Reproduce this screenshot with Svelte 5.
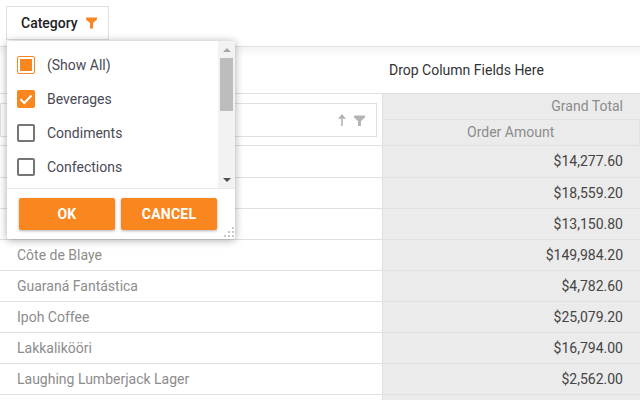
<script>
  const rows = [
    ['', '$14,277.60'], ['', '$18,559.20'], ['', '$13,150.80'],
    ['Côte de Blaye', '$149,984.20'], ['Guaraná Fantástica', '$4,782.60'],
    ['Ipoh Coffee', '$25,079.20'], ['Lakkalikööri', '$16,794.00'],
    ['Laughing Lumberjack Lager', '$2,562.00'], ['', '']
  ];
  const items = [
    { label: '(Show All)', state: 'mixed' },
    { label: 'Beverages', state: 'on' },
    { label: 'Condiments', state: 'off' },
    { label: 'Confections', state: 'off' }
  ];
</script>

<div class="page">
  <div class="toolbar">
    <div class="chip">
      <span>Category</span>
      <svg width="11" height="12" viewBox="0 0 11 12"><path d="M0 0.5H11V2.5L7 6V11.5H4V6L0 2.5Z" fill="#f9861e"/></svg>
    </div>
  </div>

  <div class="dropzone">Drop Column Fields Here</div>

  <div class="grid">
    <div class="left-head">
      <div class="filterbox">
        <svg width="8" height="12" viewBox="0 0 8 12"><path d="M4 0L8 4.8H4.8V12H3.2V4.8H0Z" fill="#b4b4b4"/></svg>
        <svg width="11" height="12" viewBox="0 0 11 12"><path d="M0 1.5H11V3.5L7 7V12H4V7L0 3.5Z" fill="#b4b4b4"/></svg>
      </div>
    </div>
    <div class="right-head">
      <div class="h1">Grand Total</div>
      <div class="h2"><span>Order Amount</span></div>
    </div>
    {#each rows as r}
      <div class="name">{r[0]}</div>
      <div class="val">{r[1]}</div>
    {/each}
  </div>

  <div class="popup">
    <div class="list">
      <div class="items">
        {#each items as it}
          <div class="item">
            <span class="box {it.state}">
              {#if it.state === 'on'}
                <svg width="18" height="18" viewBox="0 0 18 18"><path d="M3.5 9.2L7.3 13L14.5 5.5" fill="none" stroke="#fff" stroke-width="2"/></svg>
              {/if}
            </span>
            <span class="lbl">{it.label}</span>
          </div>
        {/each}
      </div>
      <div class="scroll">
        <svg class="arrow" width="8" height="4" viewBox="0 0 8 4"><path d="M0 4L4 0L8 4Z" fill="#a6a6a6"/></svg>
        <div class="thumb"></div>
        <svg class="arrow down" width="8" height="4" viewBox="0 0 8 4"><path d="M0 0L8 0L4 4Z" fill="#505050"/></svg>
      </div>
    </div>
    <div class="footer">
      <button>OK</button>
      <button>CANCEL</button>
      <svg class="grip" width="10" height="10" viewBox="0 0 10 10" fill="#c8c8c8">
        <rect x="8" y="0" width="2" height="2"/><rect x="4" y="4" width="2" height="2"/><rect x="8" y="4" width="2" height="2"/>
        <rect x="0" y="8" width="2" height="2"/><rect x="4" y="8" width="2" height="2"/><rect x="8" y="8" width="2" height="2"/>
      </svg>
    </div>
  </div>
</div>

<style>
  :global(body) { margin: 0; }
  .page {
    position: relative;
    width: 640px;
    height: 400px;
    overflow: hidden;
    background: #fff;
    font-family: Roboto, "Liberation Sans", sans-serif;
    font-size: 14px;
  }
  .toolbar {
    height: 47px;
    box-sizing: border-box;
    padding: 6px;
    border-bottom: 1px solid #e0e0e0;
  }
  .chip {
    width: 103px;
    height: 34px;
    box-sizing: border-box;
    border: 1px solid #e0e0e0;
    display: flex;
    align-items: center;
    gap: 8px;
    padding-left: 14px;
    font-weight: 500;
    font-size: 14px;
    color: #212121;
  }
  .dropzone {
    height: 46px;
    box-sizing: border-box;
    display: flex;
    align-items: center;
    padding-left: 389px;
    font-size: 14px;
    color: #333;
    background: linear-gradient(#f4f4f4, #fff 10px);
  }
  .grid {
    display: grid;
    grid-template-columns: 382px 258px;
    grid-template-rows: 52px 32px;
    grid-auto-rows: 31px;
    border-top: 1px solid #e0e0e0;
    color: #333;
  }
  .left-head {
    box-sizing: border-box;
    border-bottom: 1px solid #e0e0e0;
    padding: 9px 5px 0 0;
  }
  .filterbox {
    height: 34px;
    box-sizing: border-box;
    border: 1px solid #e0e0e0;
    display: flex;
    justify-content: flex-end;
    align-items: center;
    gap: 8px;
    padding-right: 11px;
  }
  .right-head {
    box-sizing: border-box;
    background: #ebebeb;
    border-left: 1px solid #e0e0e0;
    border-bottom: 1px solid #e0e0e0;
    color: #8c8c8c;
    font-size: 14px;
  }
  .h1 {
    height: 26px;
    box-sizing: border-box;
    border-bottom: 1px solid #e0e0e0;
    text-align: right;
    padding-right: 17px;
    line-height: 25px;
  }
  .h2 {
    height: 25px;
    box-sizing: border-box;
    border-right: 1px solid #e0e0e0;
    line-height: 25px;
    padding-left: 84px;
  }
  .name, .val {
    box-sizing: border-box;
    border-bottom: 1px solid #e0e0e0;
    font-size: 14px;
    line-height: 30px;
  }
  .name { padding-left: 17px; color: #8c8c8c; }
  .val {
    background: #ebebeb;
    border-left: 1px solid #e0e0e0;
    text-align: right;
    padding-right: 17px;
    color: #444;
  }
  .popup {
    position: absolute;
    left: 7px;
    top: 41px;
    width: 228px;
    height: 198px;
    background: #fff;
    box-shadow: 0 1px 8px rgba(0, 0, 0, 0.35);
    border-radius: 2px;
    display: flex;
    flex-direction: column;
  }
  .list {
    height: 148px;
    display: flex;
    box-sizing: border-box;
    border-bottom: 1px solid #e8e8e8;
  }
  .items { flex: 1; padding-top: 7px; }
  .item {
    height: 34px;
    display: flex;
    align-items: center;
    gap: 12px;
    padding-left: 10px;
    font-size: 14px;
    color: #4a4a55;
  }
  .box {
    width: 18px;
    height: 18px;
    box-sizing: border-box;
    border-radius: 2px;
    display: block;
    position: relative;
  }
  .box.off { border: 2px solid #757575; }
  .box.mixed { border: 1px solid #f9861e; }
  .box.mixed::after {
    content: "";
    position: absolute;
    inset: 2px;
    background: #f9861e;
  }
  .box.on { background: #f9861e; }
  .box svg { display: block; }
  .scroll {
    width: 17px;
    background: #f2f2f2;
    display: flex;
    flex-direction: column;
    align-items: center;
    padding-top: 7px;
    box-sizing: border-box;
  }
  .thumb {
    width: 13px;
    height: 53px;
    margin-top: 6px;
    background: #bdbdbd;
  }
  .arrow.down { margin-top: auto; margin-bottom: 6px; }
  .footer {
    position: relative;
    flex: 1;
    display: flex;
    gap: 6px;
    padding: 9px 0 0 12px;
  }
  button {
    width: 96px;
    height: 32px;
    border: 0;
    border-radius: 2px;
    background: #f9861e;
    color: #fff;
    font-family: inherit;
    font-size: 14px;
    font-weight: 700;
    letter-spacing: 0.25px;
    box-shadow: 0 1px 3px rgba(0, 0, 0, 0.3);
    padding: 0;
  }
  .grip { position: absolute; right: 1px; bottom: 2px; }
</style>
